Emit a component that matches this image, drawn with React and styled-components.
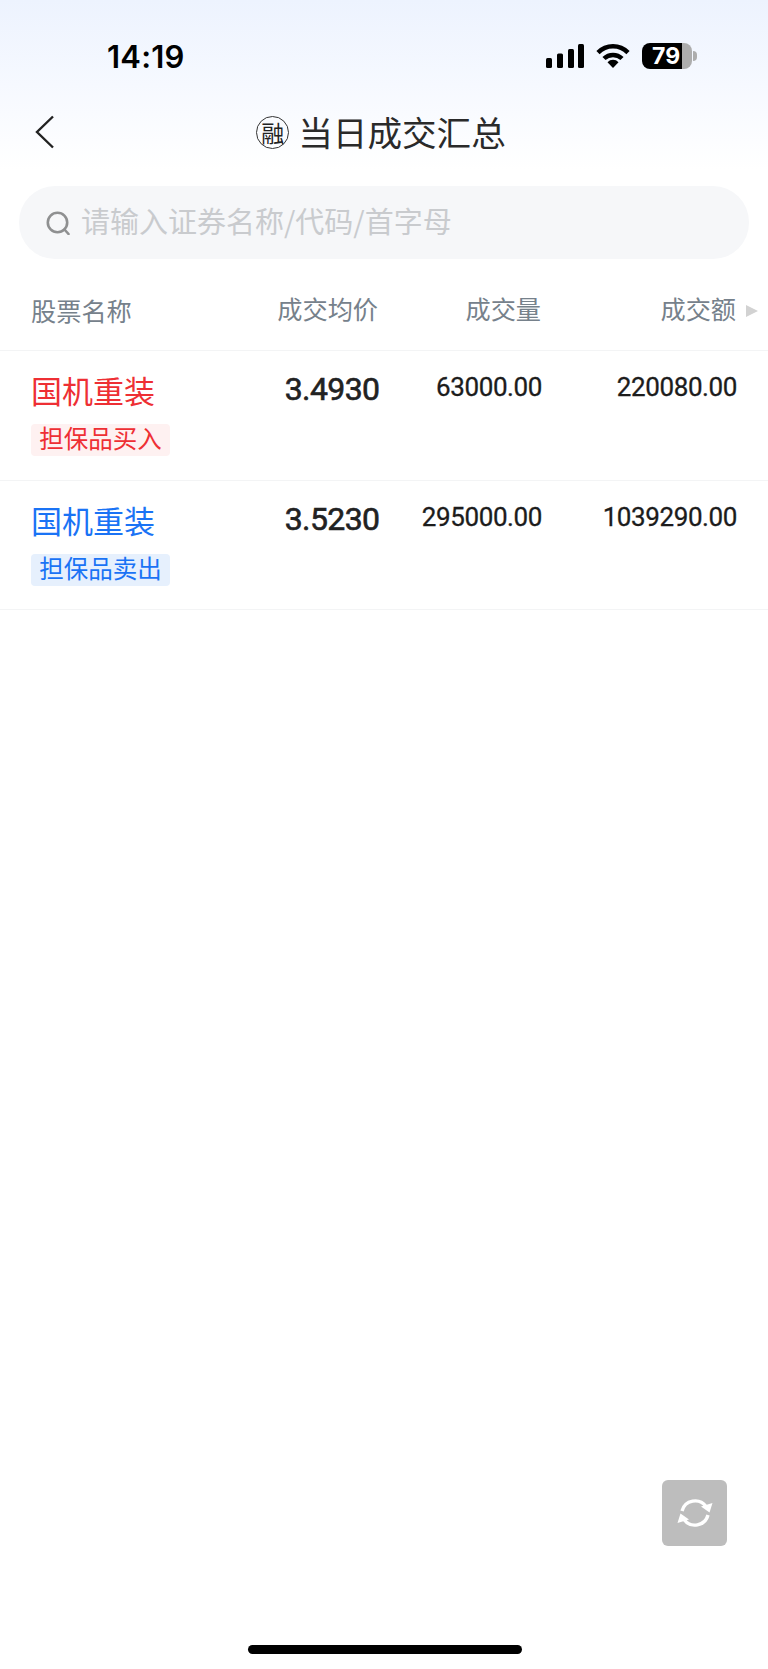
import React from 'react';
import styled, { createGlobalStyle } from 'styled-components';

const GlobalStyle = createGlobalStyle`
  html, body {
    margin: 0;
    padding: 0;
    background: #fff;
  }
  body {
    font-family: "Noto Sans CJK SC", "Noto Sans", sans-serif;
  }
  * {
    box-sizing: border-box;
  }
`;

const Screen = styled.div`
  position: relative;
  width: 768px;
  height: 1669px;
  overflow: hidden;
  background: #fff;
`;

const TopArea = styled.div`
  background: linear-gradient(180deg, #edf3fe 0%, #f6f9ff 50%, #ffffff 100%);
  height: 170px;
`;

const StatusBar = styled.div`
  height: 114px;
  padding: 43px 76px 0 107px;
  display: flex;
  justify-content: space-between;
  align-items: flex-start;
`;

const Time = styled.div`
  font-family: Inter, "Liberation Sans", sans-serif;
  font-size: 31px;
  font-weight: 600;
  line-height: 28px;
  color: #000;
  letter-spacing: 0.2px;
`;

const StatusIcons = styled.div`
  display: flex;
  align-items: center;
  gap: 12px;
  height: 26px;
`;

const Battery = styled.div`
  position: relative;
  width: 50px;
  height: 26px;
  border-radius: 8px;
  background: linear-gradient(90deg, #000 0 80%, #adadad 80% 100%);
  color: #fff;
  font-family: Inter, "Liberation Sans", sans-serif;
  font-size: 23px;
  font-weight: 700;
  line-height: 26px;
  padding-left: 10px;
  &::after {
    content: '';
    position: absolute;
    left: 51px;
    top: 8px;
    width: 4px;
    height: 10px;
    border-radius: 0 4px 4px 0;
    background: #adadad;
  }
`;

const NavBar = styled.div`
  position: relative;
  height: 36px;
  display: flex;
  align-items: center;
  justify-content: center;
  padding-right: 6px;
`;

const BackButton = styled.svg`
  position: absolute;
  left: 35px;
  top: 1px;
`;

const TitleMark = styled.span`
  width: 33px;
  height: 33px;
  margin-right: 9px;
  border: 1.5px solid #333;
  border-radius: 50%;
  display: flex;
  align-items: center;
  justify-content: center;
  font-size: 23px;
  line-height: 1;
  color: #222;
`;

const Title = styled.h1`
  margin: -2px 0 0;
  font-size: 34.6px;
  line-height: 36px;
  font-weight: 400;
  color: #2a2a2a;
`;

const SearchWrap = styled.div`
  padding: 16px 19px 0;
  background: #fff;
`;

const SearchBox = styled.div`
  height: 73px;
  border-radius: 36px;
  background: #f6f7f9;
  display: flex;
  align-items: center;
  padding-left: 27px;
`;

const Placeholder = styled.span`
  margin: -6px 0 0 11px;
  font-size: 29px;
  color: #c9cbce;
`;

const HeaderRow = styled.div`
  display: grid;
  grid-template-columns: 200px 147px 163px 195px;
  padding: 8px 0 0 31px;
  height: 92px;
  align-items: center;
  position: relative;
  border-bottom: 1px solid #f3f4f5;
`;

const HeadCell = styled.div`
  font-size: 25.2px;
  line-height: 32px;
  color: #76818b;
  text-align: ${(p) => (p.$left ? 'left' : 'right')};
  margin-top: ${(p) => (p.$left ? '2px' : '-2px')};
`;

const SortArrow = styled.span`
  position: absolute;
  left: 746px;
  top: 46px;
  width: 0;
  height: 0;
  border-style: solid;
  border-width: 6px 0 6px 12px;
  border-color: transparent transparent transparent #d2d2d2;
`;

const TradeRow = styled.div`
  display: grid;
  grid-template-columns: 200px 147px 163px 195px;
  padding: 0 0 0 31px;
  height: 129.5px;
  border-bottom: 1px solid #f3f4f5;
`;

const NameCell = styled.div`
  display: flex;
  flex-direction: column;
  align-items: flex-start;
  padding-top: 17px;
`;

const StockName = styled.div`
  font-size: 31px;
  line-height: 44px;
  color: ${(p) => (p.$side === 'buy' ? '#ee2f34' : '#1a73f5')};
`;

const SideTag = styled.span`
  margin-top: 12px;
  height: 32px;
  width: 139px;
  border-radius: 4px;
  text-align: center;
  font-size: 24.5px;
  line-height: 27px;
  color: ${(p) => (p.$side === 'buy' ? '#ee2f34' : '#1a73f5')};
  background: ${(p) => (p.$side === 'buy' ? '#fef1f1' : '#e6f0fd')};
`;

const Price = styled.div`
  font-family: Roboto, "Liberation Sans", sans-serif;
  font-size: 32px;
  font-weight: 400;
  line-height: 36px;
  padding-top: 20px;
  margin-right: -1.5px;
  text-align: right;
  color: #222;
  letter-spacing: -0.6px;
  -webkit-text-stroke: 0.6px #222;
`;

const Amount = styled.div`
  font-family: Roboto, "Liberation Sans", sans-serif;
  font-size: 26px;
  font-weight: 400;
  line-height: 30px;
  padding-top: 21px;
  margin-right: -1px;
  text-align: right;
  color: #1c1c1c;
  letter-spacing: -0.4px;
  -webkit-text-stroke: 0.3px #1c1c1c;
`;

const RefreshButton = styled.div`
  position: absolute;
  left: 662px;
  top: 1480px;
  width: 65px;
  height: 66px;
  border-radius: 6px;
  background: #bdbdbd;
  display: flex;
  align-items: center;
  justify-content: center;
`;

const HomeIndicator = styled.div`
  position: absolute;
  left: 248px;
  top: 1645px;
  width: 274px;
  height: 9px;
  border-radius: 5px;
  background: #000;
`;

const trades = [
  { side: 'buy', name: '国机重装', tag: '担保品买入', price: '3.4930', volume: '63000.00', amount: '220080.00' },
  { side: 'sell', name: '国机重装', tag: '担保品卖出', price: '3.5230', volume: '295000.00', amount: '1039290.00' },
];

function SignalIcon() {
  return (
    <svg width="38" height="24" viewBox="0 0 38 24" fill="#000">
      <rect x="0" y="14" width="6" height="10" rx="1.5" />
      <rect x="11" y="9.5" width="6" height="14.5" rx="1.5" />
      <rect x="22" y="5" width="6" height="19" rx="1.5" />
      <rect x="32" y="0" width="6" height="24" rx="1.5" />
    </svg>
  );
}

function WifiIcon() {
  return (
    <svg width="34" height="24" viewBox="0 0 34 24">
      <g fill="none" stroke="#000" strokeWidth="4.5">
        <path d="M2 8.6 A21 21 0 0 1 32 8.6" />
        <path d="M8 14.5 A13 13 0 0 1 26 14.5" />
      </g>
      <path d="M11.5 18.2 A7.6 7.6 0 0 1 22.5 18.2 L17 24 Z" fill="#000" />
    </svg>
  );
}

function SearchIcon() {
  return (
    <svg width="24" height="24" viewBox="0 0 24 24" fill="none" stroke="#8f9091" strokeWidth="2.6">
      <circle cx="11.5" cy="11.5" r="9.7" />
      <path d="M18.5 18.5 L22.5 23" strokeLinecap="round" />
    </svg>
  );
}

function RefreshIcon() {
  return (
    <svg width="38" height="34" viewBox="0 0 38 34" fill="none">
      <path d="M6 15 A13.5 13.5 0 0 1 30 10.5" stroke="#fff" strokeWidth="3.4" />
      <path d="M32 19 A13.5 13.5 0 0 1 8 23.5" stroke="#fff" strokeWidth="3.4" />
      <path d="M36.5 7 L33.5 16.5 L25 10.5 Z" fill="#fff" />
      <path d="M1.5 27 L4.5 17.5 L13 23.5 Z" fill="#fff" />
    </svg>
  );
}

export default function App() {
  return (
    <Screen>
      <GlobalStyle />
      <TopArea>
        <StatusBar>
          <Time>14:19</Time>
          <StatusIcons>
            <SignalIcon />
            <WifiIcon />
            <Battery>79</Battery>
          </StatusIcons>
        </StatusBar>
        <NavBar>
          <BackButton width="20" height="34" viewBox="0 0 20 34" fill="none" stroke="#222" strokeWidth="2.4">
            <path d="M18 1.5 L2 17 L18 32.5" />
          </BackButton>
          <TitleMark>融</TitleMark>
          <Title>当日成交汇总</Title>
        </NavBar>
      </TopArea>
      <SearchWrap>
        <SearchBox>
          <SearchIcon />
          <Placeholder>请输入证券名称/代码/首字母</Placeholder>
        </SearchBox>
      </SearchWrap>
      <HeaderRow>
        <HeadCell $left>股票名称</HeadCell>
        <HeadCell>成交均价</HeadCell>
        <HeadCell>成交量</HeadCell>
        <HeadCell>成交额</HeadCell>
        <SortArrow />
      </HeaderRow>
      {trades.map((t) => (
        <TradeRow key={t.tag}>
          <NameCell>
            <StockName $side={t.side}>{t.name}</StockName>
            <SideTag $side={t.side}>{t.tag}</SideTag>
          </NameCell>
          <Price>{t.price}</Price>
          <Amount>{t.volume}</Amount>
          <Amount>{t.amount}</Amount>
        </TradeRow>
      ))}
      <RefreshButton>
        <RefreshIcon />
      </RefreshButton>
      <HomeIndicator />
    </Screen>
  );
}
